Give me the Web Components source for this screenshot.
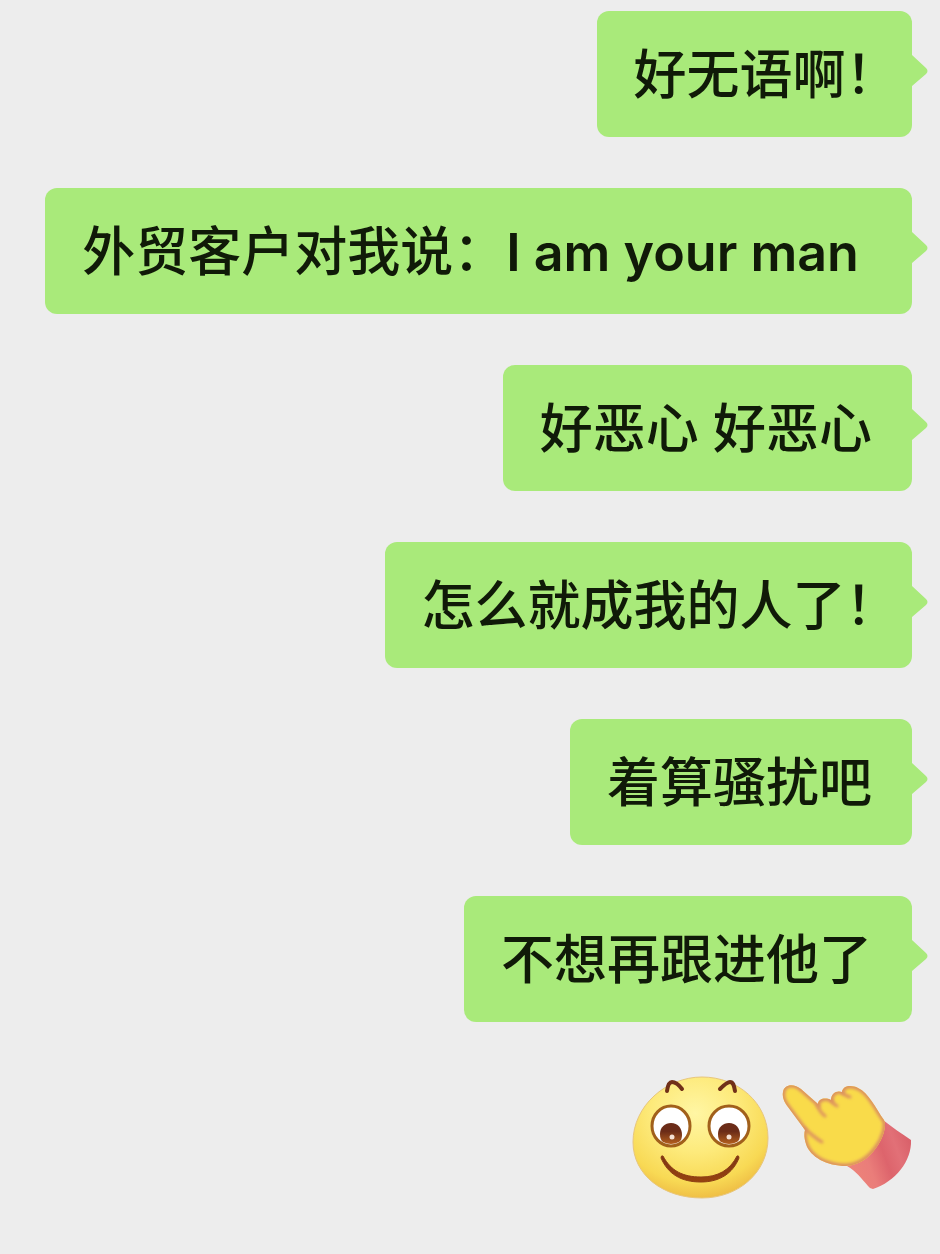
<!DOCTYPE html>
<html lang="zh-CN">
<head>
<meta charset="utf-8">
<meta name="viewport" content="width=device-width, initial-scale=1">
<title>聊天</title>
<style>
    body {
        margin: 0;
        background: #ededed;
        color: #101a08;
        font-family: Inter, "Noto Sans CJK SC", sans-serif;
    }
</style>
</head>
<body>

<chat-thread>
    <chat-bubble half-mark>好无语啊！</chat-bubble>
    <chat-bubble>外贸客户对我说：<span lang="en">I am your man&nbsp;</span></chat-bubble>
    <chat-bubble>好恶心 好恶心</chat-bubble>
    <chat-bubble half-mark>怎么就成我的人了！</chat-bubble>
    <chat-bubble>着算骚扰吧</chat-bubble>
    <chat-bubble>不想再跟进他了</chat-bubble>
    <sticker-row>
        <smile-face></smile-face>
        <pointing-hand></pointing-hand>
    </sticker-row>
</chat-thread>

<script>
(function() {

    // clones a template into an open shadow root
    class BaseElement extends HTMLElement {
        constructor() {
            super();
            this.attachShadow({mode: 'open'});
            const template = document.createElement('template');
            template.innerHTML = this.constructor.markup;
            this.shadowRoot.appendChild(template.content.cloneNode(true));
        }
    }

    class ChatThread extends BaseElement {
        static markup = `
            <style>
                :host {
                    display: block;
                }
                main {
                    display: flex;
                    flex-direction: column;
                    align-items: flex-end;
                    gap: 51px;
                    padding: 11px 28px 48px;
                }
            </style>
            <main><slot></slot></main>`;
    }

    // half-mark sets a closing full-width mark at half width
    class ChatBubble extends BaseElement {
        static markup = `
            <style>
                :host {
                    display: block;
                    position: relative;
                    box-sizing: border-box;
                    max-width: 100%;
                    padding: 37px 40px 35px 37px;
                    border-radius: 12px;
                    background: #a9ea7a;
                }
                :host([half-mark]) p {
                    font-feature-settings: "halt";
                }
                p {
                    margin: 0;
                    font-size: 53px;
                    font-weight: 500;
                    line-height: 54px;
                }
                ::slotted([lang="en"]) {
                    font-size: 52px;
                    font-weight: 600;
                    line-height: 1;
                }
                svg {
                    position: absolute;
                    top: 43px;
                    left: 100%;
                    width: 16px;
                    height: 34px;
                    fill: #a9ea7a;
                }
            </style>
            <p><slot></slot></p>
            <svg viewBox="0 0 16 34" aria-hidden="true">
                <path d="M-1 0H0V1L14 14Q17 17 14 20L0 32V34H-1Z"/>
            </svg>`;
    }

    class StickerRow extends BaseElement {
        static markup = `
            <style>
                :host {
                    display: flex;
                    align-items: flex-start;
                    gap: 12px;
                }
            </style>
            <slot></slot>`;
    }

    class SmileFace extends BaseElement {
        static markup = `
            <style>
                :host, svg {
                    display: block;
                }
            </style>
            <svg width="138" height="130" viewBox="0 0 138 130" role="img" aria-label="微笑">
                <defs>
                    <radialGradient id="skin" cx="0.46" cy="0.3" r="0.72">
                        <stop offset="0" stop-color="#fff6a4"/>
                        <stop offset="0.45" stop-color="#fdea7b"/>
                        <stop offset="0.8" stop-color="#f8d954"/>
                        <stop offset="1" stop-color="#eebb43"/>
                    </radialGradient>
                    <linearGradient id="iris" x1="0" y1="0" x2="0" y2="1">
                        <stop offset="0.4" stop-color="#6b2c18"/>
                        <stop offset="1" stop-color="#b4601e"/>
                    </linearGradient>
                    <linearGradient id="lip" x1="0" y1="0" x2="0" y2="1">
                        <stop offset="0" stop-color="#7d3516"/>
                        <stop offset="1" stop-color="#97430f"/>
                    </linearGradient>
                </defs>
                <path d="M70 4C106 4 136 30 136 65C136 99 107 125 70 125C31 125 1 102 1 69C1 33 34 4 70 4Z" fill="url(#skin)" stroke="#e8c67c" stroke-width="1"/>
                <g fill="none" stroke="#713018" stroke-width="4" stroke-linecap="round" stroke-linejoin="round">
                    <path d="M35 18C36 11 38 9 40 9C43 9 47 12 50 16"/>
                    <path d="M88 16C92 12 95 9 98 9C101 9 102 12 103 18"/>
                </g>
                <g fill="#fff" stroke="#a1601b" stroke-width="3">
                    <ellipse cx="39" cy="53" rx="19" ry="20"/>
                    <ellipse cx="97" cy="53" rx="20" ry="20"/>
                </g>
                <path d="M28 61C28 54 33 50 39 50C46 50 50 55 50 62Q50 67 47 69Q39 73 31 69Q28 67 28 61Z" fill="url(#iris)"/>
                <path d="M86 61C86 54 91 50 97 50C104 50 108 55 108 62Q108 67 105 69Q97 73 89 69Q86 67 86 61Z" fill="url(#iris)"/>
                <circle cx="40" cy="64" r="2.500" fill="#f5e1d5"/>
                <circle cx="97" cy="64" r="2.500" fill="#f5e1d5"/>
                <path d="M31 83Q29 82 29 85C36 101 49 109 69 109C88 109 101 100 107 85Q107 82 105 83C98 97 86 104 69 104C51 104 39 98 31 83Z" fill="url(#lip)" stroke="#8d3f14" stroke-width="1"/>
            </svg>`;
    }

    class PointingHand extends BaseElement {
        static markup = `
            <style>
                :host, svg {
                    display: block;
                }
            </style>
            <svg width="130" height="130" viewBox="0 0 130 130" role="img" aria-label="手指">
                <defs>
                    <linearGradient id="sleeve" x1="0" y1="0.8" x2="1" y2="0.4">
                        <stop offset="0" stop-color="#ee8579"/>
                        <stop offset="0.35" stop-color="#ea7d7a"/>
                        <stop offset="0.6" stop-color="#dd646c"/>
                        <stop offset="0.8" stop-color="#e27077"/>
                        <stop offset="1" stop-color="#da626b"/>
                    </linearGradient>
                    <filter id="soft" x="-0.1" y="-0.1" width="1.2" height="1.2">
                        <feGaussianBlur stdDeviation="1.500"/>
                    </filter>
                    <clipPath id="palm">
                        <path id="outline" d="M1 19C2 11 12 10 19 16L36 31C36 26 43 24 49 27C49 20 55 17 60 19C61 12 70 12 76 15C87 20 94 36 102 47C105 53 101 66 94 75C86 86 77 92 64 93C45 93 28 84 24 71C22 65 22 61 23 57L6 34C2 29 0 24 1 19Z"/>
                    </clipPath>
                </defs>
                <path d="M101 47C110 54 120 61 129 67C130 88 113 109 91 116Q88 116 86 113C80 106 74 98 65 93C82 88 99 67 101 47Z" fill="url(#sleeve)"/>
                <use href="#outline" fill="#f9db4a"/>
                <g clip-path="url(#palm)" fill="none" stroke="#dc915f">
                    <use href="#outline" stroke-width="5" filter="url(#soft)"/>
                    <path d="M22 55C29 61 33 65 40 69M35 32C37 37 39 40 43 43M49 27Q51 31 55 33M60 19Q63 23 68 24" stroke-width="3" stroke-linecap="round" filter="url(#soft)"/>
                </g>
            </svg>`;
    }

    // register the elements in the web browser
    window.customElements.define('chat-thread', ChatThread);
    window.customElements.define('chat-bubble', ChatBubble);
    window.customElements.define('sticker-row', StickerRow);
    window.customElements.define('smile-face', SmileFace);
    window.customElements.define('pointing-hand', PointingHand);

})();
</script>
</body>
</html>
